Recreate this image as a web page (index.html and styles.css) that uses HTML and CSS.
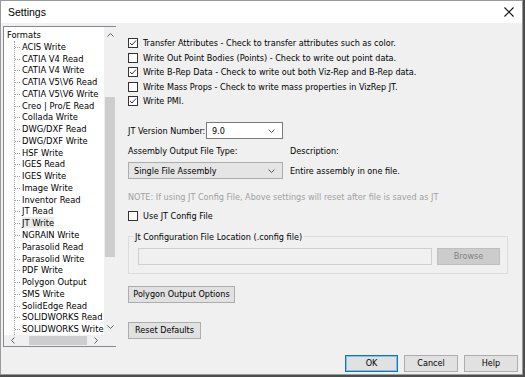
FILE: index.html
```html
<!DOCTYPE html>
<html>
<head>
    <title>Settings</title>
    <link rel="stylesheet" href="styles.css">
</head>
<body>
<div class="window">
    <div class="title-bar">
        <span class="title">Settings</span>
        <svg class="close" width="10" height="10" viewBox="0 0 10 10"><path d="M0.5 0.5L9.5 9.5M9.5 0.5L0.5 9.5" stroke="#111" stroke-width="1.1" fill="none"/></svg>
    </div>
    <div class="dialog">
        <div class="tree">
            <div class="tree-view">
                <div class="tree-root">Formats</div>
                <ul class="tree-children">
                    <li>ACIS Write</li>
                    <li>CATIA V4 Read</li>
                    <li>CATIA V4 Write</li>
                    <li>CATIA V5\V6 Read</li>
                    <li>CATIA V5\V6 Write</li>
                    <li>Creo | Pro/E Read</li>
                    <li>Collada Write</li>
                    <li>DWG/DXF Read</li>
                    <li>DWG/DXF Write</li>
                    <li>HSF Write</li>
                    <li>IGES Read</li>
                    <li>IGES Write</li>
                    <li>Image Write</li>
                    <li>Inventor Read</li>
                    <li>JT Read</li>
                    <li><span class="selected">JT Write</span></li>
                    <li>NGRAIN Write</li>
                    <li>Parasolid Read</li>
                    <li>Parasolid Write</li>
                    <li>PDF Write</li>
                    <li>Polygon Output</li>
                    <li>SMS Write</li>
                    <li>SolidEdge Read</li>
                    <li>SOLIDWORKS Read</li>
                    <li>SOLIDWORKS Write</li>
                </ul>
            </div>
            <div class="vscroll">
                <div class="arrow-v"><svg width="7" height="4" viewBox="0 0 7 4"><path d="M0.5 3.5L3.5 0.5L6.5 3.5" stroke="#606060" fill="none"/></svg></div>
                <div class="vtrack"><div class="vthumb"></div></div>
                <div class="arrow-v"><svg width="7" height="4" viewBox="0 0 7 4"><path d="M0.5 0.5L3.5 3.5L6.5 0.5" stroke="#606060" fill="none"/></svg></div>
            </div>
            <div class="hscroll">
                <div class="arrow-h"><svg width="4" height="7" viewBox="0 0 4 7"><path d="M3.5 0.5L0.5 3.5L3.5 6.5" stroke="#606060" fill="none"/></svg></div>
                <div class="htrack"><div class="hthumb"></div></div>
                <div class="arrow-h"><svg width="4" height="7" viewBox="0 0 4 7"><path d="M0.5 0.5L3.5 3.5L0.5 6.5" stroke="#606060" fill="none"/></svg></div>
            </div>
            <div class="corner"></div>
        </div>

        <div class="panel">
            <div class="checks">
                <label class="check-row"><span class="check on"></span>Transfer Attributes - Check to transfer attributes such as color.</label>
                <label class="check-row"><span class="check"></span>Write Out Point Bodies (Points) - Check to write out point data.</label>
                <label class="check-row"><span class="check on"></span>Write B-Rep Data - Check to write out both Viz-Rep and B-Rep data.</label>
                <label class="check-row"><span class="check"></span>Write Mass Props - Check to write mass properties in VizRep JT.</label>
                <label class="check-row"><span class="check on"></span>Write PMI.</label>
            </div>

            <div class="version-row">
                <span class="version-label">JT Version Number:</span>
                <div class="combo version-combo"><span>9.0</span><svg width="7" height="4" viewBox="0 0 7 4"><path d="M0.5 0.5L3.5 3.5L6.5 0.5" stroke="#555" fill="none"/></svg></div>
            </div>

            <div class="assembly-labels">
                <span class="assembly-col">Assembly Output File Type:</span>
                <span>Description:</span>
            </div>
            <div class="assembly-row">
                <div class="combo assembly-combo"><span>Single File Assembly</span><svg width="7" height="4" viewBox="0 0 7 4"><path d="M0.5 0.5L3.5 3.5L6.5 0.5" stroke="#555" fill="none"/></svg></div>
                <span class="description">Entire assembly in one file.</span>
            </div>

            <div class="note">NOTE: If using JT Config File, Above settings will reset after file is saved as JT</div>

            <label class="check-row config-check"><span class="check"></span>Use JT Config File</label>

            <fieldset class="group">
                <legend>Jt Configuration File Location (.config file)</legend>
                <div class="group-row">
                    <div class="path-input"></div>
                    <button class="btn browse" disabled>Browse</button>
                </div>
            </fieldset>

            <button class="btn polygon-btn">Polygon Output Options</button>
            <button class="btn reset-btn">Reset Defaults</button>

            <div class="footer">
                <button class="btn footer-btn default">OK</button>
                <button class="btn footer-btn">Cancel</button>
                <button class="btn footer-btn">Help</button>
            </div>
        </div>
    </div>
</div>
</body>
</html>
```

FILE: styles.css
```css
body{
    margin: 0;
    background: #4d4d4d;
    font-family: "DejaVu Sans Condensed", "DejaVu Sans", sans-serif;
    font-stretch: condensed;
    font-size: 9px;
    color: #000;
}
.window{
    width: 521px;
    height: 373px;
    border: 1px solid #9a9a9a;
    background: #f0f0f0;
    display: flex;
    flex-direction: column;
}
.title-bar{
    height: 22px;
    background: #fff;
    display: flex;
    align-items: center;
    justify-content: space-between;
    padding: 0 8px 0 7px;
}
.title{
    font-family: "Liberation Sans", Arial, sans-serif;
    font-size: 10.5px;
}
.dialog{
    flex: 1;
    display: flex;
    padding: 3px 0 0 2px;
}

/* tree with its scrollbars */
.tree{
    width: 113px;
    height: 321px;
    box-sizing: border-box;
    border: 1px solid #828790;
    background: #fff;
    display: grid;
    grid-template-columns: 1fr 12px;
    grid-template-rows: 1fr 11px;
}
.tree-view{
    overflow: hidden;
    padding: 2px 0 0 3px;
    font-size: 9.3px;
    line-height: 11.76px;
    white-space: nowrap;
}
.tree-children{
    list-style: none;
    margin: 0 0 0 7px;
    padding: 0;
    border-left: 1px dotted #a0a0a0;
}
.tree-children li{
    position: relative;
    padding-left: 7px;
}
.tree-children li::before{
    content: "";
    position: absolute;
    left: 0;
    top: 6px;
    width: 5px;
    border-top: 1px dotted #a0a0a0;
}
.selected{
    background: #ebebeb;
}
.vscroll{
    background: #f0f0f0;
    display: flex;
    flex-direction: column;
}
.arrow-v{
    height: 16px;
    display: flex;
    align-items: center;
    justify-content: center;
}
.vtrack{
    flex: 1;
    padding-top: 54px;
}
.vthumb{
    height: 160px;
    margin: 0 1px;
    background: #cdcdcd;
}
.hscroll{
    background: #f0f0f0;
    display: flex;
}
.arrow-h{
    width: 17px;
    display: flex;
    align-items: center;
    justify-content: center;
}
.htrack{
    flex: 1;
    padding: 1px 0 1px 8px;
}
.hthumb{
    width: 58px;
    height: 100%;
    background: #cdcdcd;
}
.corner{
    background: #f0f0f0;
}

/* right side */
.panel{
    flex: 1;
    margin-left: 12px;
    padding: 10px 4px 0 0;
    display: flex;
    flex-direction: column;
    align-items: flex-start;
}
.check-row{
    display: flex;
    align-items: center;
    height: 14.5px;
    white-space: nowrap;
}
.check{
    width: 10px;
    height: 10px;
    box-sizing: border-box;
    border: 1px solid #333;
    background: #fff;
    margin-right: 5px;
    flex: none;
}
.check.on{
    background: #fff url("data:image/svg+xml,%3Csvg xmlns='http://www.w3.org/2000/svg' width='8' height='8' viewBox='0 0 8 8'%3E%3Cpath d='M1 4L3 6L7 1.5' stroke='%23333' stroke-width='1' fill='none'/%3E%3C/svg%3E") center/8px 8px no-repeat;
}
.version-row{
    margin-top: 13.5px;
    display: flex;
    align-items: center;
}
.version-label{
    width: 78px;
}
.combo{
    height: 17px;
    box-sizing: border-box;
    display: flex;
    align-items: center;
    justify-content: space-between;
    padding: 0 7px 0 5px;
}
.version-combo{
    width: 77px;
    border: 1px solid #7a7a7a;
    background: #fff;
}
.assembly-labels{
    margin-top: 6px;
    display: flex;
    height: 12px;
    align-items: center;
}
.assembly-col{
    width: 162px;
}
.assembly-row{
    margin-top: 5px;
    display: flex;
    align-items: center;
}
.assembly-combo{
    width: 155px;
    border: 1px solid #acacac;
    background: #e5e5e5;
    margin-right: 7px;
}
.note{
    margin-top: 12px;
    height: 12px;
    line-height: 12px;
    color: #a0a0a0;
    white-space: nowrap;
}
.config-check{
    margin-top: 6px;
}
.group{
    margin: 7px 0 0 0;
    width: 380px;
    box-sizing: border-box;
    border: 1px solid #dcdcdc;
    padding: 5px 7px 8px 9px;
    min-width: 0;
}
.group legend{
    padding: 0 2px;
    margin-left: -5px;
    line-height: 12px;
}
.group-row{
    display: flex;
    gap: 5px;
}
.path-input{
    width: 294px;
    height: 17px;
    box-sizing: border-box;
    border: 1px solid #cfcfcf;
    background: #f0f0f0;
}
.btn{
    height: 17px;
    box-sizing: border-box;
    border: 1px solid #adadad;
    background: #e1e1e1;
    font: inherit;
    font-stretch: condensed;
    color: #000;
    padding: 0;
}
.browse{
    width: 63px;
    border-color: #bfbfbf;
    background: #cccccc;
    color: #838383;
}
.polygon-btn{
    margin-top: 12px;
    width: 107px;
}
.reset-btn{
    margin-top: 19px;
    width: 73px;
}
.footer{
    align-self: stretch;
    margin-top: 16px;
    display: flex;
    justify-content: flex-end;
    gap: 6px;
}
.footer-btn{
    width: 54px;
}
.footer-btn.default{
    width: 53px;
    border-color: #0078d7;
    box-shadow: inset 0 0 0 1px rgba(0,120,215,0.35);
}
```
